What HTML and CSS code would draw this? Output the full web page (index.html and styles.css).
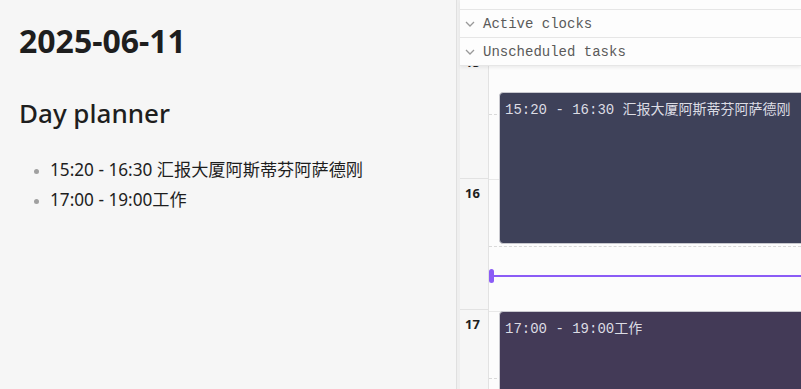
FILE: index.html
```html
<!DOCTYPE html>
<html lang="en">
<head>
    <meta charset="UTF-8">
    <meta name="viewport" content="width=device-width, initial-scale=1.0">
    <title>2025-06-11</title>
    <link rel="stylesheet" href="styles.css">
</head>
<body>
    <main class="note">
        <h1>2025-06-11</h1>
        <h2>Day planner</h2>
        <ul class="plan-list">
            <li>15:20 - 16:30 汇报大厦阿斯蒂芬阿萨德刚</li>
            <li>17:00 - 19:00工作</li>
        </ul>
    </main>

    <div class="divider"></div>

    <aside class="planner">
        <div class="planner-head">
            <div class="head-strip"></div>
            <div class="section-row">
                <svg class="chevron" width="10" height="6" viewBox="0 0 10 6"><polyline points="1,1 5,5 9,1" fill="none" stroke="#999" stroke-width="1.3"/></svg>
                <span>Active clocks</span>
            </div>
            <div class="section-row">
                <svg class="chevron" width="10" height="6" viewBox="0 0 10 6"><polyline points="1,1 5,5 9,1" fill="none" stroke="#999" stroke-width="1.3"/></svg>
                <span>Unscheduled tasks</span>
            </div>
        </div>

        <div class="timeline">
            <div class="hours">
                <div class="hour-label">15</div>
                <div class="hour-label">16</div>
                <div class="hour-label">17</div>
            </div>
            <div class="slots">
                <div class="hour-slot"><div class="half"></div></div>
                <div class="hour-slot"><div class="half"></div></div>
                <div class="hour-slot"><div class="half"></div></div>

                <!-- 132px per hour, day starts at 15:00 -->
                <div class="event event-blue" style="top: 45px; height: 152px;">15:20 - 16:30 汇报大厦阿斯蒂芬阿萨德刚</div>
                <div class="now-line" style="top: 228px;"><span class="now-dot"></span></div>
                <div class="event event-purple" style="top: 264px; height: 200px;">17:00 - 19:00工作</div>
            </div>
        </div>
    </aside>
</body>
</html>
```

FILE: styles.css
```css
html, body {
    height: 100%;
}

body {
    margin: 0;
    display: flex;
    overflow: hidden;
    font-family: "Noto Sans", "Noto Sans CJK SC", sans-serif;
    color: #1e1e1e;
    background-color: #f6f6f6;
}

/* left: the note */

.note {
    width: 456px;
    flex-shrink: 0;
    padding: 22px 19px 0;
    box-sizing: border-box;
    background-color: #f6f6f6;
}

.note h1 {
    margin: 0;
    font-size: 32px;
    font-weight: 700;
    line-height: 38px;
}

.note h2 {
    margin: 36px 0 0;
    font-size: 26px;
    font-weight: 500;
    line-height: 34px;
}

.plan-list {
    margin: 25px 0 0;
    padding-left: 31px;
    font-size: 17.2px;
    line-height: 30px;
}

.plan-list li::marker {
    color: #a0a0a0;
    font-size: 13px;
}

.divider {
    width: 3px;
    flex-shrink: 0;
    border-left: 1px solid #e0e0e0;
    background-color: #efefef;
}

/* right: the planner */

.planner {
    flex: 1;
    display: flex;
    flex-direction: column;
    background-color: #fcfcfc;
    min-width: 0;
}

.planner-head {
    position: relative;
    z-index: 2;
    background-color: #fdfdfd;
    box-shadow: 0 2px 3px rgba(0, 0, 0, 0.06);
}

.head-strip {
    height: 9px;
    border-bottom: 1px solid #e6e6e6;
}

.section-row {
    height: 27px;
    display: flex;
    align-items: center;
    gap: 8px;
    padding-left: 5px;
    border-bottom: 1px solid #e6e6e6;
    font-family: "Liberation Mono", "DejaVu Sans Mono", monospace;
    font-size: 14px;
    color: #5a5a5a;
}

.chevron {
    margin-top: 1px;
}

.timeline {
    display: grid;
    grid-template-columns: 29px 1fr;
    margin-top: -19px;
}

.hours {
    background-color: #f6f6f6;
    border-right: 1px solid #e2e2e2;
}

.hour-label {
    height: 131px;
    border-top: 1px solid #e2e2e2;
    padding: 5px 0 0 5px;
    box-sizing: border-box;
    font-size: 13px;
    font-weight: 700;
    line-height: 18px;
    color: #1e1e1e;
}

.slots {
    position: relative;
}

.hour-slot {
    height: 131px;
    border-top: 1px solid #e8e8e8;
    position: relative;
}

.half {
    position: absolute;
    left: 0;
    right: 0;
    top: 66px;
    border-top: 1px dashed #d9d9d9;
}

.event {
    position: absolute;
    left: 10px;
    width: 320px;
    box-sizing: border-box;
    padding: 7px 5px;
    border: 1px solid #c9c9cf;
    border-radius: 4px;
    font-family: "Liberation Mono", "DejaVu Sans Mono", "Noto Sans CJK SC", monospace;
    font-size: 14px;
    line-height: 20px;
    color: #dcdce4;
    white-space: nowrap;
    overflow: hidden;
}

.event-blue {
    background-color: #3e4159;
}

.event-purple {
    background-color: #433a57;
}

.now-line {
    position: absolute;
    left: 0;
    right: 0;
    height: 2px;
    background-color: #8b5cf6;
    z-index: 1;
}

.now-dot {
    position: absolute;
    left: 0;
    top: -6px;
    width: 5px;
    height: 14px;
    border-radius: 3px;
    background-color: #8b5cf6;
}
```
